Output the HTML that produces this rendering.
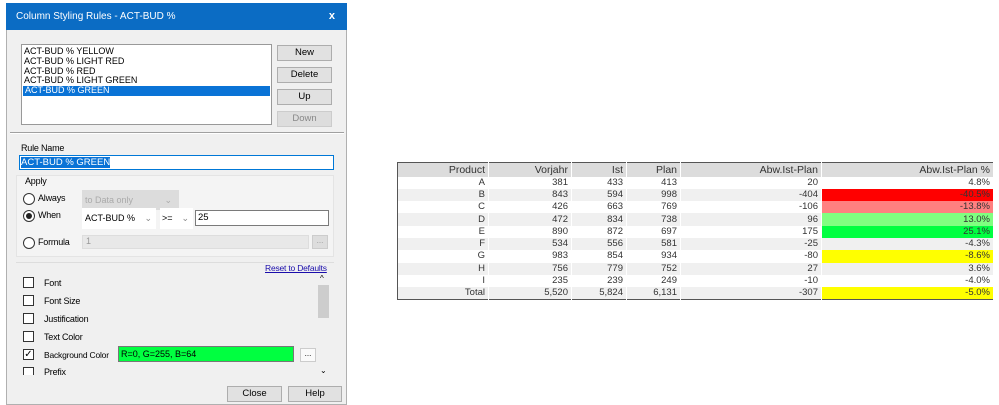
<!DOCTYPE html>
<html><head><style>
*{margin:0;padding:0;box-sizing:border-box}
body{width:999px;height:405px;background:#fff;position:relative;overflow:hidden;font-family:"Liberation Sans",sans-serif;font-size:10px;color:#000}
.a{position:absolute}
.dlg{left:6px;top:3px;width:341px;height:402px;background:#f0f0f0;border:1px solid #b0b0b0}
.title{left:6px;top:3px;width:341px;height:27px;background:#0b6cc4;color:#fff;font-size:10px;line-height:27px;padding-left:10px}
.btn{background:#e1e1e1;border:1px solid #adadad;text-align:center;font-size:9.5px;line-height:14px}
.cb{width:11px;height:11px;border:1px solid #333;background:#fff}
.rd{width:12px;height:12px;border:1px solid #333;border-radius:50%;background:#fff}
.lbl{font-size:9px;letter-spacing:-0.2px}
table{border-collapse:collapse;font-size:9.5px;color:#333}
td{text-align:right;padding:0 3px;height:12.3px;line-height:12px;border-right:1px solid #fff}
</style></head><body>
<div class="a dlg"></div>
<div class="a title">Column Styling Rules - ACT-BUD %<span style="position:absolute;right:12px;font-weight:bold;font-size:11px">x</span></div>
<div class="a" style="left:21px;top:44px;width:251px;height:81px;background:#fff;border:1px solid #999;font-size:9px;line-height:9.8px;padding-top:2px">
<div style="padding-left:2px">ACT-BUD % YELLOW</div><div style="padding-left:2px">ACT-BUD % LIGHT RED</div><div style="padding-left:2px">ACT-BUD % RED</div><div style="padding-left:2px">ACT-BUD % LIGHT GREEN</div><div style="padding-left:2px;background:#0a73d6;color:#fff;margin:0 1px">ACT-BUD % GREEN</div></div>
<div class="a btn" style="left:277px;top:45px;width:55px;height:16px">New</div>
<div class="a btn" style="left:277px;top:67px;width:55px;height:16px">Delete</div>
<div class="a btn" style="left:277px;top:89px;width:55px;height:16px">Up</div>
<div class="a btn" style="left:277px;top:111px;width:55px;height:16px;color:#888;background:#ddd;border-color:#ccc">Down</div>
<div class="a" style="left:10px;top:132px;width:334px;height:2px;border-top:1px solid #a0a0a0;border-bottom:1px solid #fff"></div>
<div class="a lbl" style="left:21px;top:143px">Rule Name</div>
<div class="a" style="left:19px;top:155px;width:315px;height:15px;background:#fff;border:1px solid #0078d7;padding:1px"><span style="background:#0a73d6;color:#fff;font-size:9.5px">ACT-BUD % GREEN</span></div>
<div class="a" style="left:16px;top:175px;width:318px;height:82px;background:#f4f4f4;border:1px solid #e4e4e4"></div>
<div class="a lbl" style="left:25px;top:176px">Apply</div>
<div class="a rd" style="left:23px;top:193px"></div><div class="a lbl" style="left:38px;top:193px">Always</div>
<div class="a rd" style="left:23px;top:210px"><div style="width:6px;height:6px;border-radius:50%;background:#222;margin:2px"></div></div><div class="a lbl" style="left:38px;top:210px">When</div>
<div class="a rd" style="left:23px;top:237px"></div><div class="a lbl" style="left:38px;top:237px">Formula</div>
<div class="a" style="left:82px;top:190px;width:97px;height:20px;background:#dcdcdc;color:#aaa;font-size:9px;padding:5px 3px">to Data only<span style="position:absolute;right:7px">⌄</span></div>
<div class="a" style="left:82px;top:208px;width:74px;height:21px;background:#fff;font-size:9px;padding:5px 3px">ACT-BUD %<span style="position:absolute;right:4px;color:#888">⌄</span></div>
<div class="a" style="left:160px;top:208px;width:33px;height:21px;background:#fff;font-size:9px;padding:5px 2px">&gt;=<span style="position:absolute;right:4px;color:#888">⌄</span></div>
<div class="a" style="left:195px;top:210px;width:134px;height:16px;background:#fff;border:1px solid #7a7a7a;font-size:9.5px;padding:1px 2px">25</div>
<div class="a" style="left:82px;top:235px;width:227px;height:14px;background:#e8e8e8;border:1px solid #ddd;color:#999;font-size:9px;padding:0 3px">1</div>
<div class="a" style="left:312px;top:235px;width:16px;height:14px;background:#ddd;border:1px solid #ccc;color:#999;font-size:8px;text-align:center">...</div>
<div class="a" style="left:16px;top:262px;width:318px;height:1px;background:#ddd"></div>
<div class="a" style="left:265px;top:263px;color:#1a0dab;text-decoration:underline;font-size:8.5px;letter-spacing:-0.2px">Reset to Defaults</div>
<div class="a" style="left:318px;top:275px;width:11px;height:100px;background:#f0f0f0"><div style="position:absolute;top:10px;left:0;width:11px;height:33px;background:#cdcdcd"></div><div style="position:absolute;top:-1px;left:2px;font-size:8px">^</div><div style="position:absolute;bottom:0;left:2px;font-size:8px">⌄</div></div>
<div class="a cb" style="left:23px;top:277px"></div><div class="a lbl" style="left:44px;top:278px">Font</div>
<div class="a cb" style="left:23px;top:295px"></div><div class="a lbl" style="left:44px;top:296px">Font Size</div>
<div class="a cb" style="left:23px;top:313px"></div><div class="a lbl" style="left:44px;top:314px">Justification</div>
<div class="a cb" style="left:23px;top:331px"></div><div class="a lbl" style="left:44px;top:332px">Text Color</div>
<div class="a cb" style="left:23px;top:349px;font-size:10px;line-height:9px;text-align:center">✓</div><div class="a lbl" style="left:44px;top:350px;font-size:8.5px">Background Color</div>
<div class="a cb" style="left:23px;top:367px;height:8px;border-bottom:none"></div><div class="a lbl" style="left:44px;top:367px;height:8px;overflow:hidden">Prefix</div>
<div class="a" style="left:118px;top:346px;width:176px;height:16px;background:#00ff40;border:1px solid #777;font-size:9px;padding:2px 2px">R=0, G=255, B=64</div>
<div class="a" style="left:300px;top:348px;width:16px;height:14px;background:#fafafa;border:1px solid #ccc;font-size:8px;text-align:center">...</div>
<div class="a btn" style="left:227px;top:386px;width:55px;height:16px">Close</div>
<div class="a btn" style="left:288px;top:386px;width:54px;height:16px">Help</div>

<table class="a" style="left:397px;top:162px;width:597px;border:1px solid #555">
<colgroup><col style="width:91px"><col style="width:83px"><col style="width:55px"><col style="width:54px"><col style="width:141px"><col></colgroup>
<tr style="background:#dcdcdc;font-size:10.5px"><td style="height:14px">Product</td><td>Vorjahr</td><td>Ist</td><td>Plan</td><td>Abw.Ist-Plan</td><td>Abw.Ist-Plan %</td></tr>
<tr><td>A</td><td>381</td><td>433</td><td>413</td><td>20</td><td>4.8%</td></tr>
<tr style="background:#f0f0f0"><td>B</td><td>843</td><td>594</td><td>998</td><td>-404</td><td style="background:#f00">-40.5%</td></tr>
<tr><td>C</td><td>426</td><td>663</td><td>769</td><td>-106</td><td style="background:#ff8080">-13.8%</td></tr>
<tr style="background:#f0f0f0"><td>D</td><td>472</td><td>834</td><td>738</td><td>96</td><td style="background:#80ff80">13.0%</td></tr>
<tr><td>E</td><td>890</td><td>872</td><td>697</td><td>175</td><td style="background:#00ff40">25.1%</td></tr>
<tr style="background:#f0f0f0"><td>F</td><td>534</td><td>556</td><td>581</td><td>-25</td><td>-4.3%</td></tr>
<tr><td>G</td><td>983</td><td>854</td><td>934</td><td>-80</td><td style="background:#ff0">-8.6%</td></tr>
<tr style="background:#f0f0f0"><td>H</td><td>756</td><td>779</td><td>752</td><td>27</td><td>3.6%</td></tr>
<tr><td>I</td><td>235</td><td>239</td><td>249</td><td>-10</td><td>-4.0%</td></tr>
<tr style="background:#f0f0f0"><td>Total</td><td>5,520</td><td>5,824</td><td>6,131</td><td>-307</td><td style="background:#ff0">-5.0%</td></tr>
</table>
</body></html>
